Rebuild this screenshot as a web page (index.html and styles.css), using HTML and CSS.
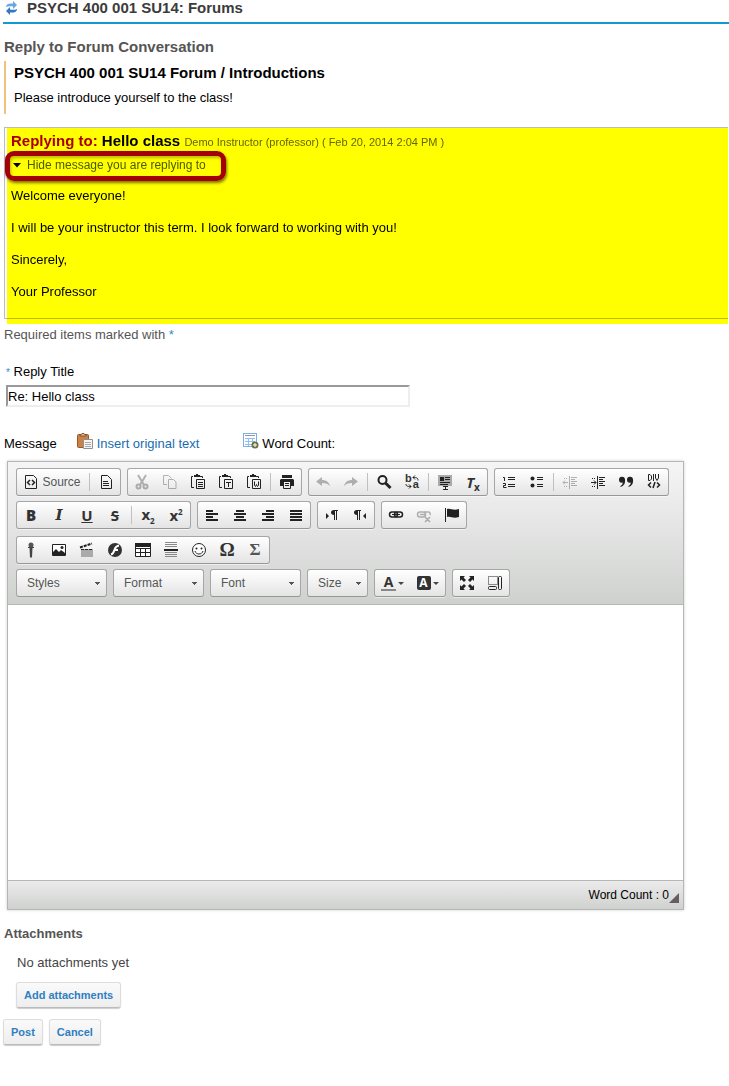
FILE: index.html
```html
<!DOCTYPE html>
<html lang="en">
<head>
<meta charset="utf-8">
<meta name="viewport" content="width=device-width, initial-scale=1">
<title>PSYCH 400 001 SU14: Forums</title>
<link rel="stylesheet" href="styles.css">
</head>
<body>
<header class="site-header">
  <a class="refresh" href="#" aria-label="Reset"><svg width="13" height="14" viewBox="0 0 13 14"><path d="M1 6C1 3 4 2 8 2.500V0l4 4-4 4V5.500C5 5 3 5 1 6Z" fill="#6aa6e2"/><path d="M12 8c0 3-3 4-7 3.500V14l-4-4 4-4v2.500c3 .5 5 .5 7-.5Z" fill="#3278c4"/></svg></a>
  <h1>PSYCH 400 001 SU14: Forums</h1>
</header>
<main>
  <h2 class="page-title">Reply to Forum Conversation</h2>
  <section class="topic">
    <h3>PSYCH 400 001 SU14 Forum / Introductions</h3>
    <p>Please introduce yourself to the class!</p>
  </section>

  <section class="quoted">
    <h4><span class="replying">Replying to:</span> Hello class <small>Demo Instructor (professor) ( Feb 20, 2014 2:04 PM )</small></h4>
    <button type="button" class="toggle"><svg width="8" height="5" viewBox="0 0 8 5"><path d="M0 0h8L4 4.500Z" fill="#000"/></svg>Hide message you are replying to</button>
    <div class="message">
      <p>Welcome everyone!</p>
      <p>I will be your instructor this term. I look forward to working with you!</p>
      <p>Sincerely,</p>
      <p>Your Professor</p>
    </div>
  </section>

  <form class="reply">
    <p class="required">Required items marked with <span class="star">*</span></p>
    <label class="title-label" for="title"><span class="star small">*</span> Reply Title</label>
    <input class="title-input" id="title" type="text" value="Re: Hello class">

    <div class="message-bar">
      <label for="body">Message</label>
      <a class="insert" href="#"><svg width="16" height="16" viewBox="0 0 16 16"><rect x=".5" y="1.500" width="11" height="13" rx="1" fill="#c98247" stroke="#9a5a28"/><path d="M3 3V1.500h1.500L5 .5h2l.5 1H9V3Z" fill="#e8c9a0" stroke="#85502a"/><path d="M6.500 6.500h9v9h-9z" fill="#f4f4f4" stroke="#909090"/><path d="M8 9.500h6M8 11.500h6M8 13.500h6" stroke="#aaa"/></svg>Insert original text</a>
      <span class="count"><svg width="16" height="16" viewBox="0 0 16 16"><rect x=".5" y=".5" width="13" height="13" fill="#fff" stroke="#7fb0e4"/><path d="M2 2.500h10" stroke="#8a9aac"/><path d="M2 5.500h10M2 8.500h10M2 11.500h8M5.500 5v8M9.500 5v8" stroke="#8fc0ef"/><circle cx="12" cy="12" r="3.500" fill="#6c7044"/><path d="M10 12h4M12 10v4" stroke="#fff"/></svg>Word Count:</span>
    </div>

    <div class="editor">
      <div class="toolbar" role="toolbar" aria-label="Editor toolbar">
        <div class="row">
          <div class="group">
            <button type="button" class="source"><svg viewBox="0 0 16 16"><path d="M2.500 1.500h8l3 3v10h-11z" class="l"/><path d="M7 6L4.500 8.500 7 11M9 6l2.500 2.500L9 11" class="l m"/></svg>Source</button>
            <span class="sep"></span>
            <button type="button" aria-label="Templates"><svg viewBox="0 0 16 16"><path d="M3.500 1.500h6l4 4v9h-10zM5 7.500h5M5 9.500h6M5 11.500h6" class="l"/></svg></button>
          </div>
          <div class="group">
            <button type="button" aria-label="Cut" disabled><svg viewBox="0 0 16 16"><path d="M4 1l6 10M12 1L6 11" class="l b"/><circle cx="4.500" cy="12.500" r="2" class="l b"/><circle cx="11.500" cy="12.500" r="2" class="l b"/></svg></button>
            <button type="button" aria-label="Copy" disabled><svg viewBox="0 0 16 16"><path d="M5 10.500H1.500v-9h5l3 3M6.500 5.500h5l2.500 2.500v6.500H6.500z" class="l"/></svg></button>
            <button type="button" aria-label="Paste"><svg viewBox="0 0 16 16"><path d="M3 2.500H1.500v11H4M10 2.500h2.500V4M6.500 5.500h8v9h-8zM8 8.500h5M8 10.500h5M8 12.500h5" class="l"/><path d="M4 1h2V0h2v1h2v2H4z"/></svg></button>
            <button type="button" aria-label="Paste as plain text"><svg viewBox="0 0 16 16"><path d="M3 2.500H1.500v11H4M10 2.500h2.500V4M6.500 5.500h8v9h-8zM8 8.500h5M10.500 8v5" class="l"/><path d="M4 1h2V0h2v1h2v2H4z"/></svg></button>
            <button type="button" aria-label="Paste from Word"><svg viewBox="0 0 16 16"><path d="M3 2.500H1.500v11H4M10 2.500h2.500V4M6.500 5.500h8v9h-8zM8.500 7.500v4l1 1 1-2 1 2 1-1v-4" class="l"/><path d="M4 1h2V0h2v1h2v2H4z"/></svg></button>
            <span class="sep"></span>
            <button type="button" aria-label="Print"><svg viewBox="0 0 16 16"><path d="M3 1h10v3H3zM1 6l1-1h12l1 1v6h-3V8H4v4H1z"/><path d="M4.500 7.500h7v7h-7zM6 9.500h4M6 11.500h4" class="l"/></svg></button>
          </div>
          <div class="group">
            <button type="button" aria-label="Undo" disabled><svg viewBox="0 0 16 16"><path d="M1 7.500L7 3v3c4 0 7 2 8 6-2-2-4-3-8-3v3z"/></svg></button>
            <button type="button" aria-label="Redo" disabled><svg viewBox="0 0 16 16"><path d="M15 7.500L9 3v3c-4 0-7 2-8 6 2-2 4-3 8-3v3z"/></svg></button>
            <span class="sep"></span>
            <button type="button" aria-label="Find"><svg viewBox="0 0 16 16"><circle cx="6.500" cy="6" r="4" class="l b"/><path d="M9.500 9l5 5" class="l bb"/></svg></button>
            <button type="button" aria-label="Replace"><span class="swap"><b>b</b><b>a</b></span><svg viewBox="0 0 16 16" class="over"><path d="M14 6.500C14 4 13 3.500 9 3.500M11 1.500l-2 2 2 2M2 10c0 2 1 2.500 5 2.500M5 10.500l2 2-2 2" class="l"/></svg></button>
            <span class="sep"></span>
            <button type="button" aria-label="Select all"><svg viewBox="0 0 16 16"><path d="M1 1h14v11H1z" fill="#aaa"/><path d="M3 3h4v4H3zM8 3h5v1H8zM8 5h5v1H8zM3 8h10v1H3zM3 10h8v1H3zM6 12h5v1H9v2h2v1H6v-1h2v-2H6z"/></svg></button>
            <button type="button" class="glyph clear" aria-label="Remove format"><i>T</i><sub>x</sub></button>
          </div>
          <div class="group">
            <button type="button" aria-label="Numbered list"><svg viewBox="0 0 16 16"><path d="M2 3.500h1.500V7M2 9.500h2.500v2H2.500v2h3" class="l"/><path d="M7 3h7v1H7zM7 5h7v1H7zM7 10h7v1H7zM7 12h7v1H7z"/></svg></button>
            <button type="button" aria-label="Bulleted list"><svg viewBox="0 0 16 16"><circle cx="3.500" cy="4.500" r="2"/><circle cx="3.500" cy="11.500" r="2"/><path d="M8 3h6v1H8zM8 5h6v1H8zM8 10h6v1H8zM8 12h6v1H8z"/></svg></button>
            <span class="sep"></span>
            <button type="button" aria-label="Decrease indent" disabled><svg viewBox="0 0 16 16"><path d="M6 8.500H1M3 6.500l-2 2 2 2M7.500 2v13M9 3.500h6M9 5.500h4M9 7.500h6M9 9.500h4M9 11.500h6" class="l"/><path d="M2 4.500h4M2 12.500h4" class="l" stroke-dasharray="1 1"/></svg></button>
            <button type="button" aria-label="Increase indent"><svg viewBox="0 0 16 16"><path d="M1 8.500h5M4 6.500l2 2-2 2M7.500 2v13M9 3.500h6M9 5.500h4M9 7.500h6M9 9.500h4M9 11.500h6" class="l"/><path d="M2 4.500h4M2 12.500h4" class="l" stroke-dasharray="1 1"/></svg></button>
            <button type="button" aria-label="Block quote"><svg viewBox="0 0 16 16"><path d="M1 6a3 3 0 0 1 6-.5C7.500 9 6 12 2.500 13v-1C4 11 5 10 4.500 8.500 2.500 9 1 8 1 6ZM9 6a3 3 0 0 1 6-.5c.5 3.500-1 6.500-4.500 7.500v-1c1.500-1 2.500-2 2-3.500C10.500 9 9 8 9 6Z"/></svg></button>
            <button type="button" aria-label="Create div container"><svg viewBox="0 0 16 16"><path d="M2.500 .5H4L5.500 2v3L4 6.500H2.500zM7.500 0v7M9.500 0v4l1.500 2.500L12.500 4V0" class="l"/><path d="M5 8.500L2.500 11 5 13.500M11 8.500l2.500 2.500-2.500 2.500M9 8l-2 6" class="l m"/></svg></button>
          </div>
        </div>
        <div class="row">
          <div class="group">
            <button type="button" class="glyph"><b>B</b></button>
            <button type="button" class="glyph serif"><i>I</i></button>
            <button type="button" class="glyph"><u>U</u></button>
            <button type="button" class="glyph"><s>S</s></button>
            <span class="sep"></span>
            <button type="button" class="glyph"><span>x<sub>2</sub></span></button>
            <button type="button" class="glyph"><span>x<sup>2</sup></span></button>
          </div>
          <div class="group">
            <button type="button" aria-label="Align left"><svg viewBox="0 0 16 16"><path d="M2 3h7v2H2zM2 6h12v2H2zM2 9h7v2H2zM2 12h12v2H2z"/></svg></button>
            <button type="button" aria-label="Center"><svg viewBox="0 0 16 16"><path d="M4 3h8v2H4zM2 6h12v2H2zM4 9h8v2H4zM2 12h12v2H2z"/></svg></button>
            <button type="button" aria-label="Align right"><svg viewBox="0 0 16 16"><path d="M6 3h8v2H6zM2 6h12v2H2zM6 9h8v2H6zM2 12h12v2H2z"/></svg></button>
            <button type="button" aria-label="Justify"><svg viewBox="0 0 16 16"><path d="M2 3h12v2H2zM2 6h12v2H2zM2 9h12v2H2zM2 12h12v2H2z"/></svg></button>
          </div>
          <div class="group">
            <button type="button" aria-label="Left to right"><svg viewBox="0 0 16 16"><path d="M2 6l3 3-3 3zM14 3v1h-1v9h-1V4h-1v9h-1V8C6 8 6 3 10 3z"/></svg></button>
            <button type="button" aria-label="Right to left"><svg viewBox="0 0 16 16"><path d="M14 6l-3 3 3 3zM9 3v1H8v9H7V4H6v9H5V8C1 8 1 3 5 3z"/></svg></button>
          </div>
          <div class="group">
            <button type="button" aria-label="Link"><svg viewBox="0 0 16 16"><rect x="1.500" y="5" width="8" height="5" rx="2.500" class="l m"/><rect x="6.500" y="5" width="8" height="5" rx="2.500" class="l m"/><path d="M4 7.500h8" class="l"/></svg></button>
            <button type="button" aria-label="Unlink" disabled><svg viewBox="0 0 16 16"><rect x="1.500" y="5" width="8" height="5" rx="2.500" class="l m"/><path d="M8 5h4a2 2 0 0 1 2 3M4 7.500h6M9 10l5 5M14 10l-5 5" class="l m"/></svg></button>
            <button type="button" aria-label="Anchor"><svg viewBox="0 0 16 16"><path d="M1 1h1v14H1zM3 2c4-1 6 2 12 0v8c-6 2-8-1-12 0z"/></svg></button>
          </div>
        </div>
        <div class="row media">
          <div class="group">
            <button type="button" aria-label="Record audio"><svg viewBox="0 0 16 16"><circle cx="8" cy="3" r="2.500" fill="#555"/><path d="M5 5h6v1H5zM6.500 6h3L9 15.500H7z" fill="#444"/></svg></button>
            <button type="button" aria-label="Image"><svg viewBox="0 0 16 16"><path d="M1.500 2.500h13v11h-13z" class="l" fill="#fff"/><circle cx="11" cy="5.500" r="1.500"/><path d="M2 13v-3l3-3 3 3 2-2 4 3v2z"/></svg></button>
            <button type="button" aria-label="Movie"><svg viewBox="0 0 16 16"><path d="M2 7h12v8H2z" fill="#aaa"/><path d="M1 5.500l12-4" class="l b" stroke-dasharray="3 1"/><path d="M2 7.500h12" class="l" stroke-dasharray="3 1"/></svg></button>
            <button type="button" aria-label="Flash"><svg viewBox="0 0 16 16"><circle cx="8" cy="8" r="7" fill="#333"/><path d="M12 3.500C8 4 8 7 7 9c-.5 2-1 3-3 3.500M7 8h4" fill="none" stroke="#fff" stroke-width="2"/></svg></button>
            <button type="button" aria-label="Table"><svg viewBox="0 0 16 16"><path d="M.5 1.500h15v13H.5z" fill="#fff"/><path d="M0 1h16v4H0z"/><path d="M.5 1.500h15v13H.5zM1 6.500h14M1 10.500h14M5.500 6v8M10.500 6v8" class="l"/></svg></button>
            <button type="button" aria-label="Horizontal line"><svg viewBox="0 0 16 16"><path d="M2 .5h12M2 2.500h12M2 4.500h12M2 10.500h12M2 12.500h12M2 14.500h12" stroke="#888"/><path d="M1 7h14v2H1z"/></svg></button>
            <button type="button" aria-label="Smiley"><svg viewBox="0 0 16 16"><circle cx="8" cy="8" r="6.500" class="l" fill="#fff"/><circle cx="5.500" cy="6.500" r="1"/><circle cx="10.500" cy="6.500" r="1"/><path d="M4 9c1 4 7 4 8 0" class="l"/></svg></button>
            <button type="button" class="glyph omega">Ω</button>
            <button type="button" class="glyph sigma">Σ</button>
          </div>
        </div>
        <div class="row">
          <select class="combo" aria-label="Styles"><option>Styles</option></select>
          <select class="combo" aria-label="Format"><option>Format</option></select>
          <select class="combo" aria-label="Font"><option>Font</option></select>
          <select class="combo narrow" aria-label="Size"><option>Size</option></select>
          <div class="group">
            <button type="button" class="glyph color"><span class="fore">A</span><span class="caret"></span></button>
            <button type="button" class="glyph color"><span class="back">A</span><span class="caret"></span></button>
          </div>
          <div class="group">
            <button type="button" aria-label="Maximize"><svg viewBox="0 0 16 16"><path d="M1 1h5L4.500 2.500 7 5 5 7 2.500 4.500 1 6zM15 1h-5l1.500 1.500L9 5l2 2 2.500-2.500L15 6zM1 15h5l-1.500-1.500L7 11 5 9l-2.500 2.500L1 10zM15 15h-5l1.500-1.500L9 11l2-2 2.500 2.500L15 10z"/></svg></button>
            <button type="button" aria-label="Show blocks"><svg viewBox="0 0 16 16"><path d="M1.500 1.500h9v8h-9z" class="l" stroke-dasharray="1 1"/><rect x="11.500" y="1.500" width="3" height="13" rx="1" class="l"/><rect x="1.500" y="11.500" width="8" height="3" rx="1" class="l"/></svg></button>
          </div>
        </div>
      </div>
      <textarea id="body" class="canvas"></textarea>
      <div class="status"><span>Word Count : 0</span><svg width="10" height="10" viewBox="0 0 10 10"><path d="M10 0v10H0z" fill="#655d5f"/></svg></div>
    </div>

    <h2 class="attachments">Attachments</h2>
    <div class="attach-body">
      <p>No attachments yet</p>
      <button type="button" class="btn">Add attachments</button>
    </div>
    <div class="actions">
      <button type="submit" class="btn">Post</button>
      <button type="button" class="btn">Cancel</button>
    </div>
  </form>
</main>
</body>
</html>
```
FILE: styles.css
```css
* { box-sizing: border-box; }
body {
  margin: 0;
  background: #fff;
  color: #000;
  font: 13px/16px "Liberation Sans", Arial, sans-serif;
}
h1, h2, h3, h4, p { margin: 0; }
a { color: #1a6cae; text-decoration: none; }
button, input, select, textarea { font: inherit; }

.site-header {
  display: flex;
  align-items: center;
  gap: 9px;
  height: 24px;
  margin-left: 3px;
  padding: 0 0 6px 2px;
  border-bottom: 2px solid #0d9bd2;
}
.refresh { display: flex; width: 13px; }
.site-header h1 { font-size: 15px; line-height: 16px; color: #3b3b3b; }
.page-title { margin: 15px 0 6px 4px; font-size: 15px; line-height: 16px; color: #555; }

.topic { margin-left: 4px; padding: 3px 0 8px 8px; border-left: 2px solid #f0c27c; }
.topic h3 { font-size: 15px; line-height: 18px; }
.topic p { margin-top: 8px; }

.quoted {
  position: relative;
  isolation: isolate;
  margin: 13px 1px 0 4px;
  padding: 4px 0 18px 6px;
  border: 1px solid #bcbcbc;
  border-right: 0;
}
.quoted::after {
  content: "";
  position: absolute;
  inset: 0 0 -6px 2px;
  background: #ff0;
  mix-blend-mode: multiply;
  pointer-events: none;
}
.quoted h4 { font-size: 15px; line-height: 18px; }
.quoted small { font-size: 11px; font-weight: normal; color: #666; }
.replying { color: #a80000; }
.toggle {
  position: relative;
  z-index: 1;
  display: flex;
  align-items: center;
  gap: 6px;
  margin: 0 0 0 -6px;
  padding: 0 15px 2px 3px;
  height: 30px;
  border: 5px solid #a30008;
  border-radius: 9px;
  background: none;
  box-shadow: 1px 2px 3px #0008, inset 1px 2px 3px #0004;
  color: #4d5a00;
  font-size: 12px;
}
.message { padding-top: 7px; }
.message p + p { margin-top: 16px; }

.required { margin: 8px 0 0 4px; color: #555; }
.star { color: #1f8fc6; }
.star.small { font-size: 10px; }
.title-label { display: block; margin: 21px 0 4px 6px; }
.title-input {
  display: block;
  width: 404px;
  max-width: calc(100% - 12px);
  height: 22px;
  margin-left: 6px;
  padding: 0;
  border: 2px solid;
  border-color: #999 #eee #eee #999;
  background: #fff;
}
.message-bar { display: flex; align-items: flex-end; margin: 25px 0 9px 4px; height: 20px; }
.insert, .count { display: flex; align-items: flex-end; gap: 4px; }
.message-bar svg { margin-bottom: 3px; }
.insert { margin-left: 20px; }
.count { margin-left: 44px; gap: 3px; }

.editor {
  margin: 0 45px 0 7px;
  border: 1px solid #b6b6b6;
  box-shadow: 0 0 3px #0003;
}
.toolbar {
  display: flex;
  flex-direction: column;
  gap: 5px;
  padding: 6px 8px 7px;
  border-bottom: 1px solid #b6b6b6;
  background: linear-gradient(#f5f5f5, #cfd1cf);
}
.row { display: flex; flex-wrap: wrap; gap: 5px 6px; }
.row.media { margin-top: 2px; }
.group, .combo {
  height: 28px;
  border: 1px solid #a6a6a6;
  border-bottom-color: #979797;
  border-radius: 3px;
  background: linear-gradient(#fff, #e4e4e4);
}
.group { display: flex; align-items: center; box-shadow: 0 1px 0 #fff8; }
.group button {
  position: relative;
  display: flex;
  align-items: center;
  justify-content: center;
  width: 28px;
  height: 26px;
  padding: 0;
  border: 0;
  background: none;
  color: #333;
}
.group svg { width: 16px; height: 16px; fill: #222; flex: none; }
.group button:disabled { opacity: .32; }
.group .source { width: 70px; gap: 3px; color: #555; font-size: 12px; }
.l { stroke: #222; stroke-width: 1; }
.l:not([fill]) { fill: none; }
.m { stroke-width: 1.5; }
.b { stroke-width: 2; }
.bb { stroke-width: 3; }
.sep { width: 1px; height: 18px; margin: 0 2px; background: #c0c0c0; }
.group .glyph { font: bold 15px/16px "Open Sans", "DejaVu Sans", sans-serif; }
.group .serif { font-family: "DejaVu Serif", serif; }
.glyph sub, .glyph sup { font-size: 8px; line-height: 8px; }
.clear sub { align-self: flex-end; padding-bottom: 4px; font-size: 10px; }
.group .omega { font: bold 19px/16px "Liberation Serif", serif; }
.group .sigma { font: bold 17px/16px "Liberation Serif", serif; color: #555; }
.swap { display: flex; gap: 1px; font: bold 11px/11px "Liberation Sans", sans-serif; }
.swap b:first-child { padding-bottom: 7px; }
.swap b:last-child { padding-top: 6px; }
.group .over { position: absolute; left: 6px; top: 5px; }
.group .color { width: 35px; gap: 2px; font-size: 14px; }
.fore { width: 15px; border-bottom: 2px solid #888; line-height: 14px; }
.back { width: 14px; border-radius: 2px; background: #333; color: #fff; font-size: 12px; line-height: 14px; }
.caret { border: 3px solid transparent; border-top-color: #444; border-bottom: 0; }
.combo {
  appearance: none;
  width: 91px;
  padding: 0 10px;
  color: #555;
  font-size: 12px;
  background:
    linear-gradient(#555, #555) right 6px top 12px / 5px 1px no-repeat,
    linear-gradient(#555, #555) right 7px top 13px / 3px 1px no-repeat,
    linear-gradient(#555, #555) right 8px top 14px / 1px 1px no-repeat,
    linear-gradient(#fff, #e4e4e4);
}
.combo.narrow { width: 61px; }
.canvas { display: block; width: 100%; height: 275px; border: 0; padding: 8px; resize: none; background: #fff; }
.status {
  display: flex;
  justify-content: flex-end;
  align-items: center;
  height: 29px;
  padding-right: 4px;
  border-top: 1px solid #b6b6b6;
  background: linear-gradient(#ebebeb, #cfd1cf);
  font-size: 12px;
}
.status svg { margin-top: 6px; }

.attachments { margin: 16px 0 13px 4px; font-size: 13px; line-height: 16px; color: #555; }
.attach-body { margin: 0 0 11px 16px; color: #444; }
.attach-body p { margin: 0 0 11px 1px; }
.btn {
  height: 26px;
  padding: 0 7px;
  border: 1px solid #ddd;
  border-bottom-color: #bbb;
  border-radius: 3px;
  background: linear-gradient(#fafafa, #eee);
  box-shadow: 0 1px 1px #0003;
  color: #2f7fc1;
  font-size: 11px;
  font-weight: bold;
}
.actions { display: flex; gap: 6px; margin: 0 0 20px 3px; }
```
